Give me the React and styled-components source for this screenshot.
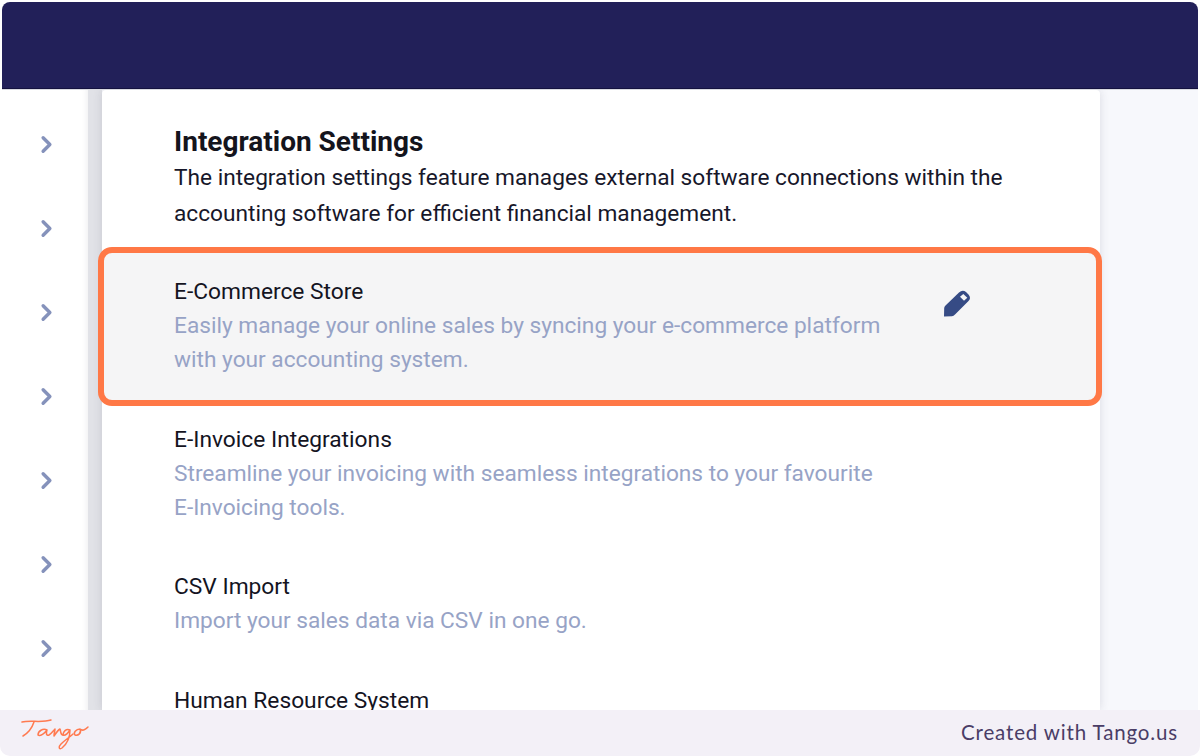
import React from 'react';
import styled, { createGlobalStyle } from 'styled-components';
import { FiChevronRight } from 'react-icons/fi';

const GlobalStyle = createGlobalStyle`
  html, body {
    margin: 0;
    padding: 0;
    background: #fff;
  }
`;

const Page = styled.div`
  width: 1200px;
  height: 756px;
  display: flex;
  flex-direction: column;
  overflow: hidden;
  font-family: Roboto, "Liberation Sans", sans-serif;
`;

const Header = styled.header`
  flex: none;
  height: 86px;
  margin: 2px 2px 0;
  background: #222059;
  border-radius: 8px 8px 0 0;
  border-bottom: 1px solid #14123f;
`;

const Body = styled.div`
  flex: 1;
  min-height: 0;
  margin: 0 2px;
  display: flex;
  background: #f7f8fc;
  border-top: 1px solid #d9dae1;
  overflow: hidden;
`;

const Sidebar = styled.nav`
  flex: none;
  width: 86px;
  background: #fff;
  box-shadow: inset -6px 0 6px -6px rgba(60, 60, 90, 0.12);
  display: flex;
  flex-direction: column;
  align-items: center;
  padding: 42px 0 0 2px;
  gap: 60px;
  box-sizing: border-box;
`;

const ChevronButton = styled.span`
  height: 24px;
  display: flex;
  align-items: center;
  color: #8592bb;
  font-size: 27px;
`;

const Gutter = styled.div`
  flex: none;
  width: 14px;
  background: #e1e2e7;
`;

const Card = styled.main`
  flex: none;
  width: 998px;
  background: #fff;
  box-shadow: 0 0 10px rgba(60, 60, 90, 0.16);
  border-radius: 4px 4px 0 0;
  display: flex;
  flex-direction: column;
`;

const Intro = styled.div`
  padding: 34px 72px 0;
`;

const Title = styled.h1`
  margin: 0;
  font-size: 28px;
  line-height: 36px;
  font-weight: 700;
  color: #14141c;
`;

const Lead = styled.p`
  margin: 0;
  font-size: 22.68px;
  line-height: 35.5px;
  color: #17172a;
  white-space: nowrap;
`;

const List = styled.div`
  margin-top: 21px;
  display: flex;
  flex-direction: column;
`;

const Row = styled.section`
  position: relative;
  display: flex;
  justify-content: space-between;
  padding: ${({ $selected }) => ($selected ? '23px 72px 25px' : '22px 72px 24px')};
  background: ${({ $selected }) => ($selected ? '#f5f5f6' : 'transparent')};
`;

const RowText = styled.div`
  width: 740px;
`;

const RowTitle = styled.h2`
  margin: 0;
  font-size: 22.75px;
  line-height: 34px;
  font-weight: 400;
  color: #14141f;
  white-space: nowrap;
`;

const RowDesc = styled.p`
  margin: 0;
  font-size: 22.68px;
  line-height: 33.5px;
  color: #97a3c6;
  white-space: nowrap;
`;

const EditIcon = styled.svg`
  width: 28px;
  height: 28px;
  color: #364b85;
  margin: 15px 57px 0 0;
`;

const Ring = styled.div`
  position: absolute;
  top: -5px;
  bottom: -5px;
  left: -4px;
  right: -2px;
  border: 6px solid #ff7846;
  border-radius: 14px;
  pointer-events: none;
`;

const Footer = styled.footer`
  flex: none;
  position: relative;
  height: 46px;
  background: #f3f0f7;
  border-radius: 0 0 10px 10px;
  display: flex;
  align-items: center;
  justify-content: space-between;
  padding: 0 22px 0 20px;
`;

const Credit = styled.span`
  font-family: Lato, "Open Sans", sans-serif;
  font-size: 20.5px;
  letter-spacing: 0.85px;
  color: #4a3d66;
  margin-bottom: 3px;
`;

const Logo = styled.svg`
  width: 70px;
  height: 34px;
  color: #ff7a50;
`;

const rows = [
  {
    title: 'E-Invoice Integrations',
    desc: ['Streamline your invoicing with seamless integrations to your favourite', 'E-Invoicing tools.'],
  },
  { title: 'CSV Import', desc: ['Import your sales data via CSV in one go.'] },
  { title: 'Human Resource System', desc: [] },
];

const RowCopy = ({ title, desc }) => (
  <RowText>
    <RowTitle>{title}</RowTitle>
    {desc.map((line) => (
      <RowDesc key={line}>{line}</RowDesc>
    ))}
  </RowText>
);

export default function App() {
  return (
    <Page>
      <GlobalStyle />
      <Header />
      <Body>
        <Sidebar>
          {[0, 1, 2, 3, 4, 5, 6].map((i) => (
            <ChevronButton key={i}>
              <FiChevronRight strokeWidth={3} />
            </ChevronButton>
          ))}
        </Sidebar>
        <Gutter />
        <Card>
          <Intro>
            <Title>Integration Settings</Title>
            <Lead>
              The integration settings feature manages external software connections within the
              <br />
              accounting software for efficient financial management.
            </Lead>
          </Intro>
          <List>
            <Row $selected>
              <RowCopy
                title="E-Commerce Store"
                desc={['Easily manage your online sales by syncing your e-commerce platform', 'with your accounting system.']}
              />
              <EditIcon viewBox="0 0 28 28">
                <path
                  fill="currentColor"
                  fillRule="evenodd"
                  d="M1 26.5 L1.2 18 Q1.3 16.5 2.5 15.5 L16 2.5 Q19.5 -0.5 23 2 L25.5 4.5 Q28.5 8 25.5 11 L12 24.5 Q10.5 26 9 26.3 Z M17 6.7 L20.3 4 L24.3 7.7 L21 10.7 Z"
                />
              </EditIcon>
              <Ring />
            </Row>
            {rows.map((row) => (
              <Row key={row.title}>
                <RowCopy title={row.title} desc={row.desc} />
              </Row>
            ))}
          </List>
        </Card>
      </Body>
      <Footer>
        <Logo viewBox="0 0 70 34" fill="none" stroke="currentColor" strokeWidth="1.5" strokeLinecap="round" strokeLinejoin="round">
          <path d="M2 6 C10 4 22 7 31 4" />
          <path d="M14 6 C12 12 8 17 3 20" />
          <path d="M27 14 C23 12 18 15 18 19 C20 21 25 17 27 14 C26 17 26 20 29 19 C31 18 33 15 35 13 C35 15 34 17 34 20 C36 17 38 14 40 13 C41 15 40 19 43 19" />
          <path d="M50 14 C46 12 43 16 43 19 C45 20 48 17 50 14 C50 20 48 27 42 32 C39 34 38 31 41 28 C45 24 50 21 53 18" />
          <path d="M60 13 C56 13 53 17 55 19 C58 20 62 17 60 13 C62 15 65 14 68 11" />
        </Logo>
        <Credit>Created with Tango.us</Credit>
      </Footer>
    </Page>
  );
}
